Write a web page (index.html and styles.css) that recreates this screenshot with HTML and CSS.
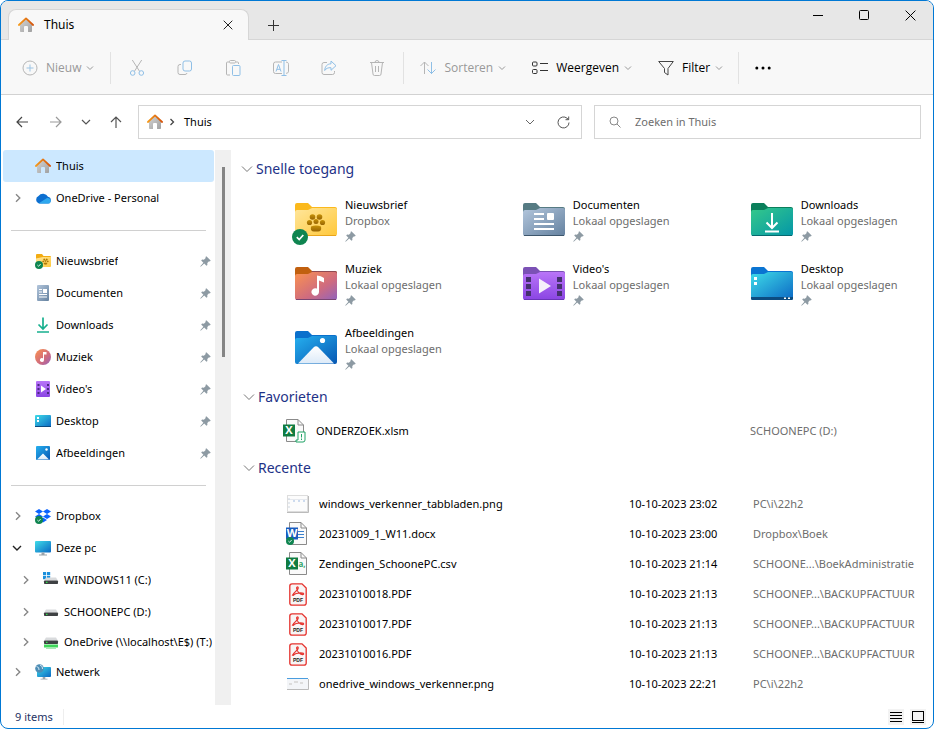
FILE: index.html
```
<!DOCTYPE html>
<html lang="nl">
<head>
    <meta charset="UTF-8">
    <meta name="viewport" content="width=device-width, initial-scale=1.0">
    <title>Thuis - Verkenner</title>
    <link rel="stylesheet" href="styles.css">
</head>
<body>
    <!-- shared icons -->
    <svg class="sprite" width="0" height="0" aria-hidden="true">
        <defs>
            <linearGradient id="gHome" x1="0" y1="0" x2="1" y2="1"><stop offset="0" stop-color="#d4d4d4"/><stop offset="1" stop-color="#a0a0a0"/></linearGradient>
            <linearGradient id="gRoof" x1="0" y1="0" x2="1" y2="0"><stop offset="0" stop-color="#f59a1b"/><stop offset="1" stop-color="#d4540c"/></linearGradient>
            <linearGradient id="gYellow" x1="0" y1="0" x2="1" y2="1"><stop offset="0" stop-color="#ffe69c"/><stop offset="1" stop-color="#ffc83a"/></linearGradient>
            <linearGradient id="gDoc" x1="0" y1="0" x2="1" y2="1"><stop offset="0" stop-color="#b3c6dc"/><stop offset="1" stop-color="#64819f"/></linearGradient>
            <linearGradient id="gDown" x1="0" y1="0" x2="1" y2="1"><stop offset="0" stop-color="#35c98a"/><stop offset="1" stop-color="#0396a8"/></linearGradient>
            <linearGradient id="gMusic" x1="0" y1="0" x2="1" y2="1"><stop offset="0" stop-color="#fb934f"/><stop offset=".6" stop-color="#cf6b7f"/><stop offset="1" stop-color="#9163bd"/></linearGradient>
            <linearGradient id="gVideo" x1="0" y1="0" x2="0" y2="1"><stop offset="0" stop-color="#b975f8"/><stop offset="1" stop-color="#8a45e3"/></linearGradient>
            <linearGradient id="gDesk" x1="0" y1="0" x2="1" y2="1"><stop offset="0" stop-color="#3fdce8"/><stop offset="1" stop-color="#0b68c4"/></linearGradient>
            <linearGradient id="gPic" x1="0" y1="0" x2="1" y2="1"><stop offset="0" stop-color="#26b0ef"/><stop offset="1" stop-color="#0657b3"/></linearGradient>
            <linearGradient id="gWhite" x1="0" y1="0" x2="0" y2="1"><stop offset="0" stop-color="#fff"/><stop offset="1" stop-color="#dceaf8"/></linearGradient>
            <linearGradient id="gPaw" x1="0" y1="0" x2="0" y2="1"><stop offset="0" stop-color="#c79208"/><stop offset="1" stop-color="#976403"/></linearGradient>
        </defs>

        <symbol id="home" viewBox="0 0 16 16">
            <path d="M2 7.500 8 2l6 5.500V14.200a.8.8 0 0 1-.8.8H10V10a1 1 0 0 0-1-1H7a1 1 0 0 0-1 1v5H2.800a.8.8 0 0 1-.8-.8z" fill="url(#gHome)"/>
            <path d="M.9 8 8 1.400 15.100 8" fill="none" stroke="url(#gRoof)" stroke-width="1.800" stroke-linecap="round" stroke-linejoin="round"/>
        </symbol>
        <symbol id="pin" viewBox="0 0 11 11">
            <path d="M6.300.3 10.700 4.600 9.800 5.400 9 5.300 7.300 7.100 7.400 8.900 6.500 9.800 4.200 7.600 1 10.500.3 10.700.5 10 3.400 6.800 1.200 4.500 2.100 3.600 3.900 3.700 5.700 2 5.500 1.100z" fill="#8d9aa3"/>
        </symbol>
        <symbol id="down" viewBox="0 0 8 8">
            <path d="M1 2.500 4 5.500 7 2.500" fill="none" stroke="currentColor"/>
        </symbol>
        <symbol id="section" viewBox="0 0 12 12">
            <path d="M1 3.500 6 8.500 11 3.500" fill="none" stroke="#777"/>
        </symbol>
        <symbol id="right" viewBox="0 0 8 10">
            <path d="M2 1.200 5.800 5 2 8.800" fill="none" stroke="currentColor" stroke-width="1.400"/>
        </symbol>
        <symbol id="check" viewBox="0 0 16 16">
            <circle cx="8" cy="8" r="8" fill="#0f8550"/>
            <path d="M4.800 8.200 7.200 10.500 11.300 6" fill="none" stroke="#fff" stroke-width="1.700"/>
        </symbol>
        <symbol id="paw" viewBox="0 0 20 20">
            <g fill="url(#gPaw)"><circle cx="6.500" cy="4" r="2.800"/><circle cx="13.500" cy="4" r="2.800"/><circle cx="3.500" cy="9.500" r="2.600"/><circle cx="16.500" cy="9.500" r="2.600"/><circle cx="10" cy="8.500" r="2.500"/><path d="M5 13.500q5-2 10 0 1 5-3 5H8q-4 0-3-5z"/></g>
        </symbol>
        <symbol id="pdf" viewBox="0 0 18 23">
            <path d="M3 .8H13L17.200 5V20a2 2 0 0 1-2 2.200H2.800a2 2 0 0 1-2-2.200V3A2.200 2.200 0 0 1 3 .8z" fill="#f8f5f5" stroke="#e5322d" stroke-width="1.300"/>
            <path d="M3.500 12.200C5 9 9.800 6.800 9.200 4.600 8.800 3.400 7.300 4 7.700 5.600 8.200 8 10.500 11 13.500 11.600 15.300 11.700 15 9.900 12.500 9.900 9 9.800 5.500 11 4.300 12.400z" fill="none" stroke="#e5322d" stroke-width="1.200"/>
        </symbol>
        <symbol id="drive" viewBox="0 0 16 16">
            <path d="M3 5.500H13L14.800 8.500H1.200z" fill="#d9dbdd"/>
            <rect x="1" y="8.500" width="14" height="3.500" rx=".8" fill="#3e4143"/>
            <path d="M3 10.300h1.500" stroke="#2ee04b" stroke-width="1.200"/>
        </symbol>
        <symbol id="monitor" viewBox="0 0 16 16">
            <rect x="0" y="1" width="16" height="11.500" rx="1" fill="url(#gDesk)"/>
            <path d="M6.500 12.500h3V14.500h-3zM4 14.500h8v1H4z" fill="#9aa3aa"/>
        </symbol>
    </svg>

    <div class="window">
        <header class="titlebar">
            <div class="tab">
                <svg class="icon16"><use href="#home"/></svg>
                <span>Thuis</span>
                <button type="button" class="plain tab-close" aria-label="Tabblad sluiten">
                    <svg width="10" height="10" viewBox="0 0 10 10"><path d="M.7.7 9.300 9.300M9.300.7.7 9.300" stroke="#222"/></svg>
                </button>
            </div>
            <button type="button" class="plain new-tab" aria-label="Nieuw tabblad">
                <svg width="11" height="11" viewBox="0 0 11 11"><path d="M5.500 0V11M0 5.500H11" stroke="#333"/></svg>
            </button>
            <div class="window-buttons">
                <button type="button" class="plain" aria-label="Minimaliseren"><svg width="10" height="12" viewBox="0 0 10 12"><path d="M0 6.500H10" stroke="#000"/></svg></button>
                <button type="button" class="plain" aria-label="Maximaliseren"><svg width="10" height="10" viewBox="0 0 10 10"><rect x=".5" y=".5" width="9" height="9" rx="1" fill="none" stroke="#000"/></svg></button>
                <button type="button" class="plain" aria-label="Sluiten"><svg width="11" height="11" viewBox="0 0 11 11"><path d="M.6.6 10.400 10.400M10.400.6.6 10.400" stroke="#000"/></svg></button>
            </div>
        </header>

        <div class="toolbar">
            <button type="button" class="plain command" disabled>
                <svg class="icon16" viewBox="0 0 16 16" fill="none"><circle cx="8" cy="8" r="7" stroke="#b5b5b5"/><path d="M8 4.500v7M4.500 8h7" stroke="#9cc4e4"/></svg>
                Nieuw
                <svg class="caret"><use href="#down"/></svg>
            </button>
            <span class="divider first"></span>
            <button type="button" class="plain tool" aria-label="Knippen" disabled>
                <svg class="icon16" viewBox="0 0 16 16" fill="none"><path d="M3.300 0 10.500 11.200M12.700 0 5.500 11.200" stroke="#b5b5b5"/><circle cx="3.700" cy="13" r="2.300" stroke="#8fbfe6"/><circle cx="12.300" cy="13" r="2.300" stroke="#8fbfe6"/></svg>
            </button>
            <button type="button" class="plain tool" aria-label="Kopiëren" disabled>
                <svg class="icon16" viewBox="0 0 16 16" fill="none"><path d="M4 4.500H3a2 2 0 0 0-2 2v6a2 2 0 0 0 2 2h5a2 2 0 0 0 2-1.500" stroke="#b5b5b5"/><rect x="6" y="1" width="8.500" height="10" rx="2" stroke="#8fbfe6"/></svg>
            </button>
            <button type="button" class="plain tool" aria-label="Plakken" disabled>
                <svg class="icon16" viewBox="0 0 16 16" fill="none"><path d="M5 15H2.500a1 1 0 0 1-1-1V3a1 1 0 0 1 1-1H4M11 2h1.500a1 1 0 0 1 1 1v1" stroke="#b5b5b5"/><rect x="4.500" y=".5" width="6" height="2.500" rx="1" stroke="#b5b5b5"/><rect x="7.500" y="5.500" width="7.500" height="10" rx="1" stroke="#8fbfe6"/></svg>
            </button>
            <button type="button" class="plain tool" aria-label="Naam wijzigen" disabled>
                <svg class="icon16" viewBox="0 0 16 16" fill="none"><path d="M9 2H2.500a2 2 0 0 0-2 2v7.500a2 2 0 0 0 2 2H9M13 2.200a2 2 0 0 1 2.500 2v7a2 2 0 0 1-2.500 2" stroke="#b5b5b5"/><path d="M3 11.500 5.500 4.500 8 11.500M4 9.300H7M8.500.5h5M8.500 15.500h5M11 .5v15" stroke="#8fbfe6"/></svg>
            </button>
            <button type="button" class="plain tool" aria-label="Delen" disabled>
                <svg class="icon16" viewBox="0 0 16 16" fill="none"><path d="M6 2.500H3a2 2 0 0 0-2 2v8a2 2 0 0 0 2 2h8.500a2 2 0 0 0 2-2V11" stroke="#b5b5b5"/><path d="M10 1 15 5.700 10 10.300V7.700C7 7.500 5 8.500 3.700 10.500 4 6.500 6 4 10 3.800z" stroke="#8fbfe6" stroke-linejoin="round"/></svg>
            </button>
            <button type="button" class="plain tool" aria-label="Verwijderen" disabled>
                <svg class="icon16" viewBox="0 0 16 16" fill="none" stroke="#b5b5b5"><path d="M1 2.500h14M2.500 2.500 4 14a1.500 1.500 0 0 0 1.500 1.500h5A1.500 1.500 0 0 0 12 14l1.500-11.500M6 2.500a2 2 0 0 1 4 0M6.500 6v6M9.500 6v6"/></svg>
            </button>
            <span class="divider second"></span>
            <button type="button" class="plain command" disabled>
                <svg class="icon16" viewBox="0 0 16 16" fill="none"><path d="M4.500 14V2M.5 6 4.500 2 8.500 6" stroke="#b5b5b5"/><path d="M11.500 2v12M7.500 9.500 11.500 13.500 15.500 9.500" stroke="#8fbfe6"/></svg>
                Sorteren
                <svg class="caret"><use href="#down"/></svg>
            </button>
            <button type="button" class="plain command">
                <svg class="icon16" viewBox="0 0 16 16" fill="none" stroke="#333"><rect x=".5" y="2" width="4.500" height="4" rx="1"/><rect x=".5" y="9.500" width="4.500" height="4" rx="1"/><path d="M8 3.500h8M8 10.500h8"/></svg>
                Weergeven
                <svg class="caret"><use href="#down"/></svg>
            </button>
            <button type="button" class="plain command">
                <svg class="icon16" viewBox="0 0 16 16" fill="none" stroke="#444"><path d="M.7 1.500H15.300L10 8.500v6.500L6.500 12.500V8.500z" stroke-linejoin="round"/></svg>
                Filter
                <svg class="caret"><use href="#down"/></svg>
            </button>
            <span class="divider third"></span>
            <button type="button" class="plain more" aria-label="Meer">
                <svg width="16" height="4" viewBox="0 0 16 4"><circle cx="1.800" cy="2" r="1.500"/><circle cx="8" cy="2" r="1.500"/><circle cx="14.200" cy="2" r="1.500"/></svg>
            </button>
        </div>

        <div class="navbar">
            <div class="nav-buttons">
                <button type="button" class="plain" aria-label="Terug"><svg width="12" height="12" viewBox="0 0 12 12" fill="none" stroke="#444" stroke-width="1.200"><path d="M12 6H1M6 1 1 6l5 5"/></svg></button>
                <button type="button" class="plain" aria-label="Vooruit"><svg width="12" height="12" viewBox="0 0 12 12" fill="none" stroke="#999" stroke-width="1.200"><path d="M0 6h11M6 1l5 5-5 5"/></svg></button>
                <button type="button" class="plain" aria-label="Recente locaties"><svg width="10" height="8" viewBox="0 0 10 8" fill="none" stroke="#555" stroke-width="1.200"><path d="M1 2 5 6 9 2"/></svg></button>
                <button type="button" class="plain" aria-label="Omhoog"><svg width="12" height="12" viewBox="0 0 12 12" fill="none" stroke="#555" stroke-width="1.200"><path d="M6 12V1M1 6l5-5 5 5"/></svg></button>
            </div>
            <div class="address">
                <svg class="icon16"><use href="#home"/></svg>
                <svg class="crumb-arrow" viewBox="0 0 6 8"><path d="M1.500 1 4.500 4 1.500 7" fill="none" stroke="#444" stroke-width="1.300"/></svg>
                <a href="#">Thuis</a>
                <button type="button" class="plain history" aria-label="Vorige locaties"><svg width="10" height="8" viewBox="0 0 10 8"><path d="M1 2 5 6 9 2" fill="none" stroke="#666"/></svg></button>
                <button type="button" class="plain refresh" aria-label="Vernieuwen"><svg width="13" height="13" viewBox="0 0 13 13" fill="none" stroke="#555"><path d="M12 6.500A5.500 5.500 0 1 1 10 2.200L11.500 3.500M11.700.5V3.700H8.500"/></svg></button>
            </div>
            <label class="search">
                <svg width="12" height="12" viewBox="0 0 12 12" fill="none" stroke="#888"><circle cx="5" cy="5" r="4"/><path d="M8 8 11.500 11.500"/></svg>
                <input type="search" placeholder="Zoeken in Thuis" aria-label="Zoeken in Thuis">
            </label>
        </div>

        <div class="content">
            <div class="sidebar">
                <nav class="tree">
                    <ul>
                        <li><a href="#" class="item active"><span class="expander"></span><svg class="icon16"><use href="#home"/></svg><span class="label">Thuis</span></a></li>
                        <li><a href="#" class="item"><svg class="expander"><use href="#right"/></svg>
                            <svg class="icon16" viewBox="0 0 16 16"><path d="M4 13.500A4 4 0 0 1 3.500 6 5.500 5.500 0 0 1 13 6.800 3.400 3.400 0 0 1 13 13.500z" fill="#0d6fd0"/><path d="M3.500 13.500 12 8a3 3 0 0 1 3.500 4 2 2 0 0 1-2 1.500z" fill="#2fa8ee"/></svg>
                            <span class="label">OneDrive - Personal</span></a></li>
                    </ul>
                    <hr>
                    <ul>
                        <li><a href="#" class="item"><span class="expander"></span>
                            <svg class="icon16" viewBox="0 0 16 16"><path d="M1 2a1 1 0 0 1 1-1h5l1.500 2H15a1 1 0 0 1 1 1v4H1z" fill="#f3ac12"/><path d="M1 5.500 8 4h8v9a1 1 0 0 1-1 1H1z" fill="url(#gYellow)"/><use href="#paw" x="7" y="5" width="7" height="7"/><use href="#check" x="0" y="8" width="8" height="8"/></svg>
                            <span class="label">Nieuwsbrief</span><svg class="pin"><use href="#pin"/></svg></a></li>
                        <li><a href="#" class="item"><span class="expander"></span>
                            <svg class="icon16" viewBox="0 0 16 16"><rect x="2" y="0" width="12" height="16" rx="1" fill="url(#gDoc)"/><path d="M4 4.500h3M4 7h3M4 9.500h8M4 12h8" stroke="#fff"/><path d="M8 4h4v4H8z" fill="#fff"/></svg>
                            <span class="label">Documenten</span><svg class="pin"><use href="#pin"/></svg></a></li>
                        <li><a href="#" class="item"><span class="expander"></span>
                            <svg class="icon16" viewBox="0 0 16 16" fill="none" stroke="#17b08e" stroke-width="1.700"><path d="M8 .5v11M3.500 7.500 8 12l4.500-4.500M2 15h12"/></svg>
                            <span class="label">Downloads</span><svg class="pin"><use href="#pin"/></svg></a></li>
                        <li><a href="#" class="item"><span class="expander"></span>
                            <svg class="icon16" viewBox="0 0 16 16"><circle cx="8" cy="8" r="8" fill="url(#gMusic)"/><path d="M8 3h3.500v2.500H9V11a2 2 0 1 1-1-1.700z" fill="#fff"/></svg>
                            <span class="label">Muziek</span><svg class="pin"><use href="#pin"/></svg></a></li>
                        <li><a href="#" class="item"><span class="expander"></span>
                            <svg class="icon16" viewBox="0 0 16 16"><rect x="1" y="0" width="14" height="16" rx="1" fill="url(#gVideo)"/><path d="M2.500 3h2v2h-2zM2.500 7h2v2h-2zM2.500 11h2v2h-2zM12 3h2v2h-2zM12 7h2v2h-2zM12 11h2v2h-2z" fill="#4a2a80"/><path d="M6 4.500 11 8 6 11.500z" fill="#fff"/></svg>
                            <span class="label">Video's</span><svg class="pin"><use href="#pin"/></svg></a></li>
                        <li><a href="#" class="item"><span class="expander"></span>
                            <svg class="icon16" viewBox="0 0 16 16"><rect x="0" y="2" width="16" height="12" rx="1" fill="url(#gDesk)"/><path d="M0 13h16v1H0z" fill="#0c4a80"/><path d="M2 4h2v2H2zM2 7h2v2H2z" fill="#fff"/></svg>
                            <span class="label">Desktop</span><svg class="pin"><use href="#pin"/></svg></a></li>
                        <li><a href="#" class="item"><span class="expander"></span>
                            <svg class="icon16" viewBox="0 0 16 16"><rect x="1" y="1" width="14" height="14" rx="1" fill="url(#gPic)"/><path d="M2 14.500 8 8.500l6 6z" fill="url(#gWhite)"/><circle cx="11.500" cy="4.500" r="1.200" fill="#fff"/></svg>
                            <span class="label">Afbeeldingen</span><svg class="pin"><use href="#pin"/></svg></a></li>
                    </ul>
                    <hr>
                    <ul>
                        <li><a href="#" class="item"><svg class="expander"><use href="#right"/></svg>
                            <svg class="icon16" viewBox="0 0 16 16"><path d="M4 1 8 3.500 4 6 0 3.500zM12 1l4 2.500L12 6 8 3.500zM4 6l4 2.500L4 11 0 8.500zM12 6l4 2.500-4 2.500-4-2.500zM8 9.500l4 2.500-4 2.500L4 12z" fill="#0a63ff"/><use href="#check" x="0" y="8" width="8" height="8"/></svg>
                            <span class="label">Dropbox</span></a></li>
                        <li><a href="#" class="item"><svg class="expander open" viewBox="0 0 10 10"><path d="M1 3 5 7 9 3" fill="none" stroke="#222" stroke-width="1.400"/></svg>
                            <svg class="icon16"><use href="#monitor"/></svg>
                            <span class="label">Deze pc</span></a>
                            <ul class="sub">
                                <li><a href="#" class="item"><svg class="expander"><use href="#right"/></svg>
                                    <svg class="icon16" viewBox="0 0 16 16"><path d="M0 0h3.200v3.200H0zM4 0h3.200v3.200H4zM0 4h3.200v3.200H0zM4 4h3.200v3.200H4z" fill="#1b8fdc"/><use href="#drive" x="0" y="0" width="16" height="16"/></svg>
                                    <span class="label">WINDOWS11 (C:)</span></a></li>
                                <li><a href="#" class="item"><svg class="expander"><use href="#right"/></svg>
                                    <svg class="icon16"><use href="#drive"/></svg>
                                    <span class="label">SCHOONEPC (D:)</span></a></li>
                                <li><a href="#" class="item short"><svg class="expander"><use href="#right"/></svg>
                                    <svg class="icon16" viewBox="0 0 16 16"><use href="#drive" x="0" y="-2" width="16" height="16"/><path d="M1 10.500h14v3H1z" fill="#3fd65a"/><path d="M3 13.500h10v1.500H3z" fill="#a7e8b2"/></svg>
                                    <span class="label">OneDrive (\\localhost\E$) (T:)</span></a></li>
                            </ul></li>
                        <li><a href="#" class="item"><svg class="expander"><use href="#right"/></svg>
                            <svg class="icon16" viewBox="0 0 16 16"><use href="#monitor" x="2" y="2" width="14" height="14"/><circle cx="4.500" cy="4.500" r="4.300" fill="#4d8db5"/><path d="M1.500 2.500Q4.500 3 4 6M5 1Q8 2 7.500 5" fill="none" stroke="#cfe5f2"/></svg>
                            <span class="label">Netwerk</span></a></li>
                    </ul>
                </nav>
                <div class="scrollbar"><div class="thumb"></div></div>
            </div>

            <main class="main">
                <section class="quick">
                    <h2><svg class="section-arrow"><use href="#section"/></svg>Snelle toegang</h2>
                    <div class="tiles">
                        <a href="#" class="tile">
                            <span class="folder">
                                <svg width="42" height="34" viewBox="0 0 42 34"><path d="M0 2a2 2 0 0 1 2-2h11l4 4h23a2 2 0 0 1 2 2v8H0z" fill="#fbb91c"/><path d="M0 9a2 2 0 0 1 2-2h11l4-2h23a2 2 0 0 1 2 2v24a2 2 0 0 1-2 2H2a2 2 0 0 1-2-2z" fill="url(#gYellow)"/><path d="M1 32.500h40" stroke="#e9a51c"/><use href="#paw" x="11" y="10" width="20" height="20"/></svg>
                                <svg class="badge"><use href="#check"/></svg>
                            </span>
                            <span class="tile-text"><span>Nieuwsbrief</span><span class="muted">Dropbox</span><svg class="pin"><use href="#pin"/></svg></span>
                        </a>
                        <a href="#" class="tile">
                            <span class="folder">
                                <svg width="42" height="34" viewBox="0 0 42 34"><path d="M0 2a2 2 0 0 1 2-2h11l4 4h23a2 2 0 0 1 2 2v8H0z" fill="#567b83"/><path d="M0 9a2 2 0 0 1 2-2h11l4-2h23a2 2 0 0 1 2 2v24a2 2 0 0 1-2 2H2a2 2 0 0 1-2-2z" fill="url(#gDoc)"/><path d="M1 32.500h40" stroke="#3d566c"/><path d="M11 11h10M11 16h10M11 21h20M11 26h20" stroke="#fff" stroke-width="2"/><rect x="24" y="10" width="7" height="7" rx="1" fill="#fff"/></svg>
                            </span>
                            <span class="tile-text"><span>Documenten</span><span class="muted">Lokaal opgeslagen</span><svg class="pin"><use href="#pin"/></svg></span>
                        </a>
                        <a href="#" class="tile">
                            <span class="folder">
                                <svg width="42" height="34" viewBox="0 0 42 34"><path d="M0 2a2 2 0 0 1 2-2h11l4 4h23a2 2 0 0 1 2 2v8H0z" fill="#0b7f5b"/><path d="M0 9a2 2 0 0 1 2-2h11l4-2h23a2 2 0 0 1 2 2v24a2 2 0 0 1-2 2H2a2 2 0 0 1-2-2z" fill="url(#gDown)"/><path d="M1 32.500h40" stroke="#06696f"/><path d="M21 10v15M15.500 19.500 21 25l5.500-5.500M14 28.500h14" fill="none" stroke="#fff" stroke-width="2"/></svg>
                            </span>
                            <span class="tile-text"><span>Downloads</span><span class="muted">Lokaal opgeslagen</span><svg class="pin"><use href="#pin"/></svg></span>
                        </a>
                        <a href="#" class="tile">
                            <span class="folder">
                                <svg width="42" height="34" viewBox="0 0 42 34"><path d="M0 2a2 2 0 0 1 2-2h11l4 4h23a2 2 0 0 1 2 2v8H0z" fill="#c1600f"/><path d="M17 4h23a2 2 0 0 1 2 2v2H15z" fill="#8f4a52"/><path d="M0 9a2 2 0 0 1 2-2h11l4-2h23a2 2 0 0 1 2 2v24a2 2 0 0 1-2 2H2a2 2 0 0 1-2-2z" fill="url(#gMusic)"/><path d="M1 32.500h40" stroke="#7a4672"/><path d="M22 8.500q4 0 7 2.500v4.500l-5-2V25a3.800 3.800 0 1 1-2-3.400z" fill="#fff"/></svg>
                            </span>
                            <span class="tile-text"><span>Muziek</span><span class="muted">Lokaal opgeslagen</span><svg class="pin"><use href="#pin"/></svg></span>
                        </a>
                        <a href="#" class="tile">
                            <span class="folder">
                                <svg width="42" height="34" viewBox="0 0 42 34"><path d="M0 2a2 2 0 0 1 2-2h11l4 4h23a2 2 0 0 1 2 2v8H0z" fill="#7b51b5"/><path d="M0 9a2 2 0 0 1 2-2h11l4-2h23a2 2 0 0 1 2 2v24a2 2 0 0 1-2 2H2a2 2 0 0 1-2-2z" fill="url(#gVideo)"/><path d="M1 32.500h40" stroke="#6a35b8"/><path d="M3 10h5v5H3zM3 17h5v5H3zM3 24h5v5H3zM34 10h5v5h-5zM34 17h5v5h-5zM34 24h5v5h-5z" fill="#45316f"/><path d="M16 11.500 28 19 16 26.500z" fill="#f5f0fa"/></svg>
                            </span>
                            <span class="tile-text"><span>Video's</span><span class="muted">Lokaal opgeslagen</span><svg class="pin"><use href="#pin"/></svg></span>
                        </a>
                        <a href="#" class="tile">
                            <span class="folder">
                                <svg width="42" height="34" viewBox="0 0 42 34"><path d="M0 2a2 2 0 0 1 2-2h11l4 4h23a2 2 0 0 1 2 2v8H0z" fill="#0a74d2"/><path d="M0 9a2 2 0 0 1 2-2h11l4-2h23a2 2 0 0 1 2 2v24a2 2 0 0 1-2 2H2a2 2 0 0 1-2-2z" fill="url(#gDesk)"/><path d="M0 30h42v1.500a1.500 1.500 0 0 1-1.500 1.500h-39A1.500 1.500 0 0 1 0 31.500z" fill="#0c4c80"/><path d="M3 10h3v3H3zM3 15h3v3H3zM33 30.500h2v1.500h-2zM37 30.500h2v1.500h-2z" fill="#fff"/></svg>
                            </span>
                            <span class="tile-text"><span>Desktop</span><span class="muted">Lokaal opgeslagen</span><svg class="pin"><use href="#pin"/></svg></span>
                        </a>
                        <a href="#" class="tile">
                            <span class="folder">
                                <svg width="42" height="34" viewBox="0 0 42 34"><path d="M0 2a2 2 0 0 1 2-2h11l4 4h23a2 2 0 0 1 2 2v8H0z" fill="#0a70cc"/><path d="M0 9a2 2 0 0 1 2-2h11l4-2h23a2 2 0 0 1 2 2v24a2 2 0 0 1-2 2H2a2 2 0 0 1-2-2z" fill="url(#gPic)"/><path d="M3 32.500 18.500 16.500q2.500-2.500 5 0L39 32.500z" fill="url(#gWhite)"/><circle cx="27.500" cy="9.500" r="2.600" fill="#fff"/></svg>
                            </span>
                            <span class="tile-text"><span>Afbeeldingen</span><span class="muted">Lokaal opgeslagen</span><svg class="pin"><use href="#pin"/></svg></span>
                        </a>
                    </div>
                </section>

                <section class="favorites">
                    <h2><svg class="section-arrow"><use href="#section"/></svg>Favorieten</h2>
                    <table>
                        <colgroup><col class="col-icon"><col><col class="col-date"><col class="col-path"></colgroup>
                        <tr>
                            <td><svg width="24" height="24" viewBox="0 0 24 24"><path d="M4.500.5H16L21.500 6v16.500h-17z" fill="#fafafa" stroke="#8a8a8a"/><path d="M16 .5V6h5.500" fill="none" stroke="#8a8a8a"/><rect x="1" y="5.500" width="12" height="12" fill="#107c41"/><text x="7" y="15" class="app-letter">X</text><path d="M16 13h7v8q0 2-2 2h-7v-2h2z" fill="#fff" stroke="#21a366"/><path d="M19.500 15v3.500M19.500 19.500V21" stroke="#21a366"/></svg></td>
                            <td>ONDERZOEK.xlsm</td>
                            <td></td>
                            <td class="muted">SCHOONEPC (D:)</td>
                        </tr>
                    </table>
                </section>

                <section class="recent">
                    <h2><svg class="section-arrow"><use href="#section"/></svg>Recente</h2>
                    <table>
                        <colgroup><col class="col-icon"><col><col class="col-date"><col class="col-path"></colgroup>
                        <tr>
                            <td><svg width="24" height="24" viewBox="0 0 24 24"><rect x="2.500" y="3.500" width="20" height="16" fill="#fcfcfc" stroke="#ddd"/><path d="M2 20.500h21.500V4" fill="none" stroke="#bbb"/><path d="M3 7.500h19" stroke="#e6e9ee"/><path d="M8 9h2M13 9h2M18 9h2" stroke="#9db9e0"/><path d="M4 6v12" stroke="#ccd5e0" stroke-dasharray="2 2"/></svg></td>
                            <td>windows_verkenner_tabbladen.png</td>
                            <td>10-10-2023 23:02</td>
                            <td class="muted">PC\i\22h2</td>
                        </tr>
                        <tr>
                            <td><svg width="24" height="24" viewBox="0 0 24 24"><path d="M4.500.5H16L21.500 6v16.500h-17z" fill="#fafafa" stroke="#8a8a8a"/><path d="M16 .5V6h5.500" fill="none" stroke="#8a8a8a"/><path d="M13 9.500h6M13 12.500h6M13 15.500h6" stroke="#3a80cc"/><rect x="1" y="5.500" width="12" height="12" fill="#185abd"/><text x="7" y="15" class="app-letter">W</text><use href="#check" x="1" y="15" width="8" height="8"/></svg></td>
                            <td>20231009_1_W11.docx</td>
                            <td>10-10-2023 23:00</td>
                            <td class="muted">Dropbox\Boek</td>
                        </tr>
                        <tr>
                            <td><svg width="24" height="24" viewBox="0 0 24 24"><path d="M4.500.5H16L21.500 6v16.500h-17z" fill="#fafafa" stroke="#8a8a8a"/><path d="M16 .5V6h5.500" fill="none" stroke="#8a8a8a"/><rect x="1" y="5.500" width="12" height="12" fill="#107c41"/><text x="7" y="15" class="app-letter">X</text><text x="17" y="15" class="csv-letter">a,</text></svg></td>
                            <td>Zendingen_SchoonePC.csv</td>
                            <td>10-10-2023 21:14</td>
                            <td class="muted">SCHOONE...\BoekAdministratie</td>
                        </tr>
                        <tr>
                            <td><svg class="pdf" viewBox="0 0 18 23"><use href="#pdf"/><text x="9" y="19" class="pdf-text">PDF</text></svg></td>
                            <td>20231010018.PDF</td>
                            <td>10-10-2023 21:13</td>
                            <td class="muted">SCHOONEP...\BACKUPFACTUUR</td>
                        </tr>
                        <tr>
                            <td><svg class="pdf" viewBox="0 0 18 23"><use href="#pdf"/><text x="9" y="19" class="pdf-text">PDF</text></svg></td>
                            <td>20231010017.PDF</td>
                            <td>10-10-2023 21:13</td>
                            <td class="muted">SCHOONEP...\BACKUPFACTUUR</td>
                        </tr>
                        <tr>
                            <td><svg class="pdf" viewBox="0 0 18 23"><use href="#pdf"/><text x="9" y="19" class="pdf-text">PDF</text></svg></td>
                            <td>20231010016.PDF</td>
                            <td>10-10-2023 21:13</td>
                            <td class="muted">SCHOONEP...\BACKUPFACTUUR</td>
                        </tr>
                        <tr>
                            <td><svg width="24" height="24" viewBox="0 0 24 24"><rect x="2" y="6" width="21" height="11" fill="#f3f5f8"/><path d="M2 6.500h21" stroke="#4a9ddf"/><path d="M2 17.500h21.500V7" fill="none" stroke="#bbb"/><path d="M4 12h3M9 10h4M15 11h3" stroke="#dcdcdc" stroke-width="2"/></svg></td>
                            <td>onedrive_windows_verkenner.png</td>
                            <td>10-10-2023 22:21</td>
                            <td class="muted">PC\i\22h2</td>
                        </tr>
                    </table>
                </section>
            </main>
        </div>

        <footer class="statusbar">
            <span class="count">9 items</span>
            <button type="button" class="plain view" aria-label="Details"><svg width="12" height="12" viewBox="0 0 12 12"><path d="M0 1.500h12M0 4.500h12M0 7.500h12M0 10.500h12" stroke="#000"/></svg></button>
            <button type="button" class="plain view" aria-label="Grote pictogrammen"><svg width="12" height="12" viewBox="0 0 12 12"><rect x=".5" y=".5" width="11" height="9" fill="none" stroke="#000"/><path d="M0 11.500h12" stroke="#000"/></svg></button>
        </footer>
    </div>
</body>
</html>
```
FILE: styles.css
```
* { box-sizing: border-box; }
body { margin: 0; background: #fff; color: #000; font-family: "Noto Sans", sans-serif; font-size: 11px; line-height: 16px; }
a { color: inherit; text-decoration: none; }
ul { list-style: none; margin: 0; padding: 0; }
svg { display: block; flex: none; }
.sprite { position: absolute; }
.plain { display: flex; align-items: center; justify-content: center; padding: 0; border: 0; background: none; color: #000; font: inherit; }
.icon16 { width: 16px; height: 16px; }
.pin { width: 11px; height: 11px; }
.muted { color: #6d6d6d; }

.window { display: flex; flex-direction: column; min-height: 100vh; border: 1px solid #0078d4; border-radius: 8px; overflow: hidden; background: #fff; }

/* title bar with tabs */
.titlebar { display: flex; align-items: flex-end; height: 39px; background: #e7e7e7; box-shadow: inset 0 -1px #d6d6d6; }
.tab { display: flex; align-items: center; gap: 10px; width: 241px; height: 31px; margin-left: 7px; padding: 0 15px 0 9px; background: #f8f8f8; border: 1px solid #d6d6d6; border-bottom: 0; border-radius: 8px 8px 0 0; font-size: 12px; }
.tab-close { margin-left: auto; height: 30px; }
.new-tab { width: 48px; height: 30px; }
.window-buttons { display: flex; align-self: flex-start; margin-left: auto; }
.window-buttons .plain { width: 46px; height: 28px; }

/* command bar */
.toolbar { display: flex; align-items: center; height: 55px; padding: 1px 0 0 12px; background: #f8f8f8; border-bottom: 1px solid #d2d2d2; font-family: "Open Sans", sans-serif; font-size: 12px; }
.command { gap: 8px; height: 32px; padding: 0 9px; white-space: nowrap; }
.command + .command { margin-left: 8px; }
.command:disabled { color: #999; }
.caret { width: 8px; height: 8px; margin-left: -3px; color: #999; }
.tool { width: 48px; height: 32px; }
.divider { width: 1px; height: 32px; background: #e2e2e2; }
.first { margin: 0 2px 0 7px; }
.second { margin: 0 7px 0 2px; }
.third { margin: 0 8px 0 6px; }
.more { width: 32px; height: 32px; }

/* address and search */
.navbar { display: flex; align-items: flex-start; height: 55px; padding: 10px 12px 0 6px; }
.nav-buttons { display: flex; margin-right: 7px; }
.nav-buttons .plain { width: 30px; height: 34px; }
.nav-buttons .plain:first-child { margin-right: 4px; }
.address, .search { display: flex; align-items: center; height: 34px; border: 1px solid #d5d5d5; background: #fff; }
.address { flex: 1 1 444px; margin-right: 12px; padding: 0 10px 0 8px; }
.address a { margin-left: 9px; }
.crumb-arrow { width: 6px; height: 8px; margin-left: 6px; }
.history { width: 24px; height: 30px; margin-left: auto; }
.refresh { width: 15px; height: 30px; margin-left: 14px; }
.search { flex: 1 1 327px; padding: 0 14px; gap: 14px; }
.search input { flex: 1; min-width: 0; padding: 0; border: 0; outline: 0; background: none; font: inherit; }
.search input::placeholder { color: #6d6d6d; opacity: 1; }

.content { display: flex; flex: 1; }

/* navigation tree */
.sidebar { display: flex; flex: none; width: 230px; }
.tree { flex: 1; min-width: 0; padding: 0 1px 0 2px; }
.tree hr { height: 1px; margin: 16px 8px 14px; border: 0; background: #d0d0d0; }
.item { display: flex; align-items: center; height: 32px; padding: 0 3px 0 11px; border-radius: 3px; }
.item.active { background: #cce8ff; }
.item.short { height: 28px; }
.sub .item { padding-left: 19px; padding-right: 0; }
.expander { flex: none; width: 8px; height: 10px; margin-right: 13px; color: #888; }
.expander.open { width: 10px; margin: 0 13px 0 -2px; }
.label { margin-left: 5px; overflow: hidden; white-space: nowrap; }
.item .pin { margin-left: auto; }
.scrollbar { width: 16px; padding: 17px 6px 0 7px; background: #f0f0f0; }
.thumb { width: 3px; height: 190px; background: #858585; }

/* file area */
.main { flex: 1; min-width: 0; }
h2 { display: flex; align-items: center; gap: 3px; margin: 0; color: #1e3287; font-size: 14px; font-weight: 400; line-height: 20px; }
.section-arrow { width: 12px; height: 12px; }
.quick { padding: 9px 0 0 10px; }
.tiles { display: grid; grid-template-columns: 5fr 5fr 4fr; row-gap: 16px; padding: 18px 0 0 54px; }
.tile { display: flex; gap: 8px; height: 48px; }
.folder { position: relative; padding-top: 6px; }
.badge { position: absolute; left: -3px; top: 32px; width: 16px; height: 16px; }
.tile-text { display: flex; flex-direction: column; white-space: nowrap; }
.tile-text .pin { margin-top: 2px; }
.favorites, .recent { padding-left: 12px; }
.favorites { padding-top: 14px; }
.recent { padding-top: 12px; }
table { table-layout: fixed; border-collapse: collapse; }
td { height: 30px; padding: 0; white-space: nowrap; overflow: hidden; }
.col-icon { width: 34px; }
.col-date { width: 124px; }
.col-path { width: 180px; }
.favorites table { width: calc(100% - 42px); margin: 9px 3px 0 39px; }
.recent table { width: calc(100% - 42px); margin: 11px 0 0 42px; }
.pdf { width: 18px; height: 23px; margin-left: 4px; }
.pdf-text { font: bold 5px "Liberation Sans", sans-serif; text-anchor: middle; fill: #222; }
.app-letter { font: bold 11px "Open Sans", sans-serif; text-anchor: middle; fill: #fff; }
.csv-letter { font: bold 8px "Open Sans", sans-serif; text-anchor: middle; fill: #33a56b; }

/* status bar */
.statusbar { display: flex; align-items: center; gap: 6px; height: 23px; padding: 0 7px 0 14px; color: #1e3264; }
.count { margin-right: auto; padding-right: 10px; border-right: 1px solid #eee; }
.view { width: 16px; height: 16px; background: #f3f3f3; }
```
